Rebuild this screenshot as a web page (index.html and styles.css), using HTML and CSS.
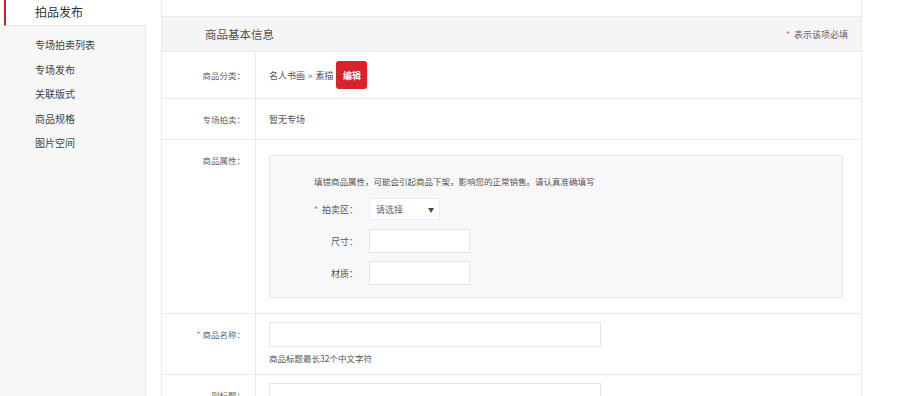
FILE: index.html
```html
<!DOCTYPE html>
<html lang="zh">
<head>
<meta charset="utf-8">
<link rel="stylesheet" href="styles.css">
</head>
<body>
<div class="page">
  <aside class="sidebar">
    <div class="side-title">拍品发布</div>
    <ul class="side-menu">
      <li>专场拍卖列表</li>
      <li>专场发布</li>
      <li>关联版式</li>
      <li>商品规格</li>
      <li>图片空间</li>
    </ul>
  </aside>
  <main class="panel">
    <div class="panel-top"></div>
    <div class="panel-head">
      <span class="head-title">商品基本信息</span>
      <span class="head-note"><i class="star">*</i> 表示该项必填</span>
    </div>
    <div class="row row-cat">
      <div class="label">商品分类：</div>
      <div class="field field-inline">
        <span>名人书画</span><span class="gt">&gt;</span><span>素描</span>
        <button class="btn-edit">编辑</button>
      </div>
    </div>
    <div class="row row-zc">
      <div class="label">专场拍卖：</div>
      <div class="field field-inline"><span>暂无专场</span></div>
    </div>
    <div class="row row-attr">
      <div class="label label-top">商品属性：</div>
      <div class="field">
        <div class="attr-box">
          <p class="attr-tip">填错商品属性，可能会引起商品下架，影响您的正常销售。请认真准确填写</p>
          <div class="attr-line line-sel">
            <span class="attr-label"><i class="star">*</i> 拍卖区：</span>
            <div class="select"><span>请选择</span><span class="caret">▼</span></div>
          </div>
          <div class="attr-line line-size">
            <span class="attr-label">尺寸：</span>
            <div class="input input-sm"></div>
          </div>
          <div class="attr-line line-mat">
            <span class="attr-label">材质：</span>
            <div class="input input-sm"></div>
          </div>
        </div>
      </div>
    </div>
    <div class="row row-name">
      <div class="label label-top"><i class="star">*</i> 商品名称：</div>
      <div class="field">
        <div class="input input-lg"></div>
        <p class="hint">商品标题最长32个中文字符</p>
      </div>
    </div>
    <div class="row row-sub">
      <div class="label label-top">副标题：</div>
      <div class="field">
        <div class="input input-lg"></div>
      </div>
    </div>
  </main>
</div>
</body>
</html>
```
FILE: styles.css
```css
* { box-sizing: border-box; margin: 0; padding: 0; }
html, body { background: #fff; }
body {
  font-family: "Noto Sans CJK SC", "Noto Sans", sans-serif;
  font-size: 9px;
  color: #555;
  overflow: hidden;
  height: 396px;
}
.page {
  display: flex;
  align-items: flex-start;
  gap: 15px;
}
.sidebar {
  width: 146px;
  flex: none;
}
.side-title {
  margin-left: 4px;
  height: 26px;
  line-height: 24px;
  padding-left: 29px;
  border-left: 2px solid #c8262c;
  border-bottom: 1px solid #e6e6e6;
  font-size: 12px;
  color: #333;
}
.side-menu {
  list-style: none;
  background: #f7f7f8;
  border-right: 1px solid #e9e9eb;
  padding-top: 7px;
  height: 400px;
}
.side-menu li {
  padding-left: 35px;
  height: 24.5px;
  line-height: 24px;
  font-size: 10px;
  color: #444;
}
.panel {
  width: 701px;
  flex: none;
  border-left: 1px solid #ececee;
  border-right: 1px solid #ececee;
  min-height: 396px;
}
.panel-top { height: 16px; }
.panel-head {
  height: 36px;
  background: #f5f4f6;
  border-top: 1px solid #ececee;
  border-bottom: 1px solid #e9e9eb;
  display: flex;
  align-items: center;
  justify-content: space-between;
  padding: 0 13px 0 43px;
}
.head-title { font-size: 11.5px; color: #555; }
.head-note { font-size: 9px; color: #666; }
.star { font-style: normal; color: #e06a6a; margin-right: 2px; }
.row {
  display: flex;
  border-bottom: 1px solid #ececee;
}
.label {
  width: 94px;
  flex: none;
  border-right: 1px solid #ececee;
  padding-right: 10px;
  font-size: 8.5px;
  color: #666;
  display: flex;
  align-items: center;
  justify-content: flex-end;
}
.label-top { align-items: flex-start; }
.field {
  flex: 1;
  padding-left: 13px;
  font-size: 9px;
  color: #555;
}
.field-inline { display: flex; align-items: center; }
.gt { margin: 0 3px; font-size: 8px; }
.row-cat { height: 47px; }
.row-zc { height: 41px; }
.btn-edit {
  margin-left: 3px;
  width: 31px;
  height: 28px;
  background: #d9232a;
  color: #fff;
  border: none;
  border-radius: 3px;
  font-family: inherit;
  font-size: 9px;
  font-weight: bold;
}
.row-attr { height: 174px; }
.row-attr .label { padding-top: 14px; }
.row-attr .field { padding-top: 15px; }
.attr-box {
  width: 574px;
  height: 143px;
  background: #f8f7f9;
  border: 1px solid #e9e8ea;
  padding-top: 18px;
}
.attr-tip {
  padding-left: 44px;
  font-size: 8.5px;
  color: #555;
  line-height: 14px;
}
.attr-line {
  display: flex;
  align-items: center;
}
.line-sel { margin-top: 10px; }
.line-size { margin-top: 9px; }
.line-mat { margin-top: 8px; }
.attr-label {
  width: 99px;
  text-align: right;
  padding-right: 11px;
  font-size: 9px;
  color: #555;
}
.select {
  width: 71px;
  height: 22px;
  background: #fff;
  border: 1px solid #eeedef;
  display: flex;
  align-items: center;
  justify-content: space-between;
  padding: 0 5px 0 6px;
  font-size: 9px;
  color: #666;
}
.caret { font-size: 6px; color: #444; }
.input {
  background: #fff;
  border: 1px solid #e6e5e8;
}
.input-sm { width: 101px; height: 24px; }
.row-name { height: 61px; }
.row-name .label { padding-top: 14px; }
.row-name .field { padding-top: 8px; }
.input-lg { width: 332px; height: 25px; }
.hint { margin-top: 5px; font-size: 8.5px; color: #555; }
.row-sub { height: 40px; border-bottom: none; }
.row-sub .label { padding-top: 14px; }
.row-sub .field { padding-top: 8px; }
```
